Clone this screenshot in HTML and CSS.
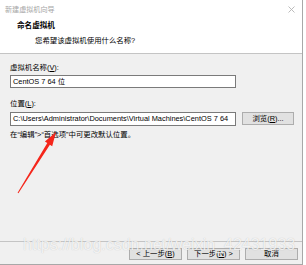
FILE: index.html
```html
<!DOCTYPE html>
<html>
<head>
<meta charset="utf-8">
<title>新建虚拟机向导</title>
<link rel="stylesheet" href="styles.css">
</head>
<body>
<div class="dialog">
  <div class="titlebar">
    <span class="caption">新建虚拟机向导</span>
    <svg class="close" width="7" height="7" viewBox="0 0 7 7"><path d="M0.5 0.5L6.5 6.5M6.5 0.5L0.5 6.5" stroke="#b4b4b4" stroke-width="0.9" fill="none"/></svg>
  </div>
  <div class="header">
    <h1>命名虚拟机</h1>
    <p>您希望该虚拟机使用什么名称?</p>
  </div>
  <div class="content">
    <div class="label">虚拟机名称(<u>V</u>):</div>
    <div class="field">CentOS 7 64 位</div>
    <div class="label second">位置(<u>L</u>):</div>
    <div class="row">
      <div class="field">C:\Users\Administrator\Documents\Virtual Machines\CentOS 7 64</div>
      <button class="btn browse">浏览(<u>R</u>)...</button>
    </div>
    <p class="hint">在“编辑”&gt;“首选项”中可更改默认位置。</p>
  </div>
  <div class="footer">
    <button class="btn">&lt; 上一步(<u>B</u>)</button>
    <button class="btn">下一步(<u>N</u>) &gt;</button>
    <button class="btn">取消</button>
  </div>
</div>

<!-- 标注箭头 -->
<svg class="arrow" width="306" height="265" viewBox="0 0 306 265">
  <polygon points="56,132 52.2,146.3 49.9,144.7 18.4,193.3 17.6,192.7 47.3,143.1 44.9,141.6" fill="#f5261b"/>
</svg>

<div class="watermark">https://blog.csdn.net/weixin_42431933</div>
</body>
</html>
```

FILE: styles.css
```css
html, body { margin: 0; padding: 0; }
body { width: 306px; height: 265px; background: #fff; position: relative; overflow: hidden; font: 7.4px/10px "Liberation Sans", "Noto Sans CJK SC", sans-serif; color: #000; }

.dialog { width: 302px; height: 264px; display: flex; flex-direction: column; background: #f0f0f0; border-right: 1px solid #a8a8a8; border-bottom: 1px solid #a8a8a8; }

.titlebar { height: 20px; display: flex; align-items: center; justify-content: space-between; padding: 0 7px 0 5px; background: #fff; }
.titlebar .caption { color: #a6a6a6; font-size: 7.1px; }
.titlebar .close { margin-top: -2px; }

.header { height: 33px; background: #fff; border-bottom: 1px solid #c4c4c4; }
.header h1 { margin: 1px 0 0; padding-left: 17px; font-size: 7.6px; line-height: 10px; font-weight: bold; }
.header p { margin: 5px 0 0; padding-left: 35px; line-height: 10px; }

.content { flex: 1; padding: 9px 0 0 10px; }
.label { line-height: 10px; }
.label.second { margin-top: 11px; }
.field { width: 222px; height: 11px; margin-top: 2px; padding-left: 2px; border: 1px solid #7a7a7a; background: #fff; line-height: 11px; white-space: nowrap; overflow: hidden; }
.row { display: flex; align-items: flex-start; margin-top: 3px; }
.row .field { margin-top: 0; height: 12px; line-height: 12px; }
.hint { margin: 4px 0 0; line-height: 10px; }

.btn { box-sizing: border-box; width: 53px; height: 12px; margin: 0; padding: 0; border: 1px solid #adadad; background: #e1e1e1; font: inherit; line-height: 10px; color: #000; }
.browse { width: 52px; height: 13px; margin-left: 6px; }

.footer { height: 23px; box-sizing: border-box; border-top: 1px solid #c4c4c4; display: flex; justify-content: flex-end; gap: 5px; padding: 6px 4px 0 0; }

.arrow { position: absolute; left: 0; top: 0; pointer-events: none; }

.watermark { position: absolute; left: 23px; top: 236px; font: 16px/18px "Liberation Sans", sans-serif; color: rgba(255, 255, 255, 0.8); text-shadow: 0 0 1px rgba(0, 0, 0, 0.22); white-space: nowrap; pointer-events: none; }
```
